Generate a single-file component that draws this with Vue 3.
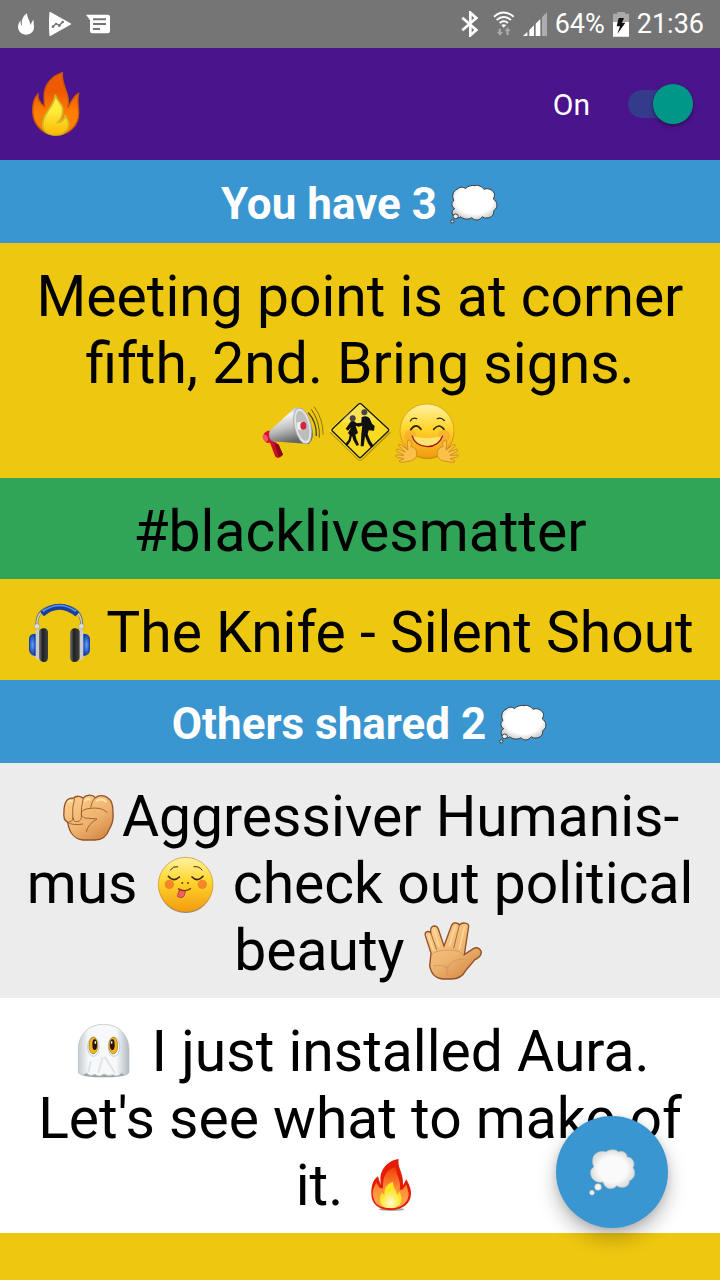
<script setup>
import { ref } from 'vue'

const sharing = ref(true)
</script>

<template>
  <div class="app">
    <svg class="defs" aria-hidden="true">
      <defs>
        <radialGradient id="cloudFill" cx=".5" cy=".42" r=".58"><stop offset=".7" stop-color="#fff" /><stop offset="1" stop-color="#cfcfcf" /></radialGradient>
        <symbol id="cloud" viewBox="741 48 153 153">
          <path d="M770 87C774 81 786 79 793 86C801 78 812 75 822 77C832 74 844 80 849 88C861 82 881 91 881 106C879 111 878 114 877 117C888 124 891 137 884 147C879 150 878 152 878 155C879 164 872 173 858 174C851 174 847 173 844 170C837 181 822 184 812 173C803 180 785 178 780 170C775 176 757 174 754 162C752 156 754 149 761 146C751 141 750 128 759 121C752 112 754 92 770 87Z" fill="url(#cloudFill)" stroke="#3b3b3b" stroke-width="3" />
          <ellipse cx="764" cy="169" rx="8" ry="7" fill="#eee" stroke="#3b3b3b" stroke-width="3" />
          <circle cx="754" cy="184" r="5" fill="#ccc" stroke="#3b3b3b" stroke-width="3" />
        </symbol>
      </defs>
    </svg>

    <div class="status">
      <div class="group notices">
        <svg width="16" height="22" viewBox="54 40 48 66"><path d="M81 41C67 50 64 63 66 79C62 76 61 69 62 62C57 69 54 75 54 83C55 97 66 105 78 105C92 105 102 96 102 82C102 75 100 67 101 60C96 64 95 70 91 76C91 65 81 55 81 41Z" fill="#fff" /></svg>
        <svg width="22" height="24" viewBox="153 36 66 72"><path d="M157 39L216 72L157 105Q155 72 157 39Z" fill="#fff" stroke="#fff" stroke-width="6" stroke-linejoin="round" /><path d="M165 80L174 71L184 76L194 66" fill="none" stroke="#757575" stroke-width="4" /><g fill="#757575"><circle cx="165" cy="80" r="4" /><circle cx="174" cy="71" r="3" /><circle cx="184" cy="77" r="4" /><circle cx="194" cy="66" r="4" /></g></svg>
        <svg width="24" height="20" viewBox="258 42 72 60"><path d="M258 44H324Q330 44 330 50V94Q330 100 324 100H276Q270 100 270 94V61Z" fill="#fff" /><path d="M279 58H318M279 72H318M279 87H300" stroke="#757575" stroke-width="6" /></svg>
      </div>
      <div class="group system">
        <svg class="bt" width="18" height="26" viewBox="66 33 54 78"><path d="M70 53L112 90L94 106V38L112 54L70 91" fill="none" stroke="#fff" stroke-width="8" /></svg>
        <svg class="wifi" width="22" height="26" viewBox="164 33 66 78"><g fill="none" stroke="#fff" stroke-width="6"><path d="M167 50Q196 25 226 50" /><path d="M175 60Q196 42 218 60" /><path d="M184 69Q196 59 209 69" /></g><path d="M189 75Q196 70 204 75L196 83Z" fill="#fff" /><path d="M181 86H188V96H194L185 107L176 96H181ZM204 105H211V93H217L208 82L199 93H204Z" fill="#aaa" /></svg>
        <svg class="signal" width="24" height="26" viewBox="252 33 72 78"><path d="M252 108L265 96V108ZM271 108V90L285 76V108ZM290 108V71L304 57V108Z" fill="#fff" /><path d="M309 108V52L324 36V108Z" fill="#adadad" /></svg>
        <span class="pct">64%</span>
        <svg class="battery" width="16" height="26" viewBox="519 33 48 78"><path d="M519 110V41H532V36H555V41H567V110Z" fill="#aaa" /><path d="M519 66H567V110H519Z" fill="#fff" /><path d="M536 54H552L546 68H556L532 102L540 79H530Z" fill="#111" /></svg>
        <time>21:36</time>
      </div>
    </div>

    <header class="bar">
      <svg width="52" height="70" viewBox="90 204 156 210" role="img" aria-label="Aura">
        <defs>
          <linearGradient id="brandOuter" x1="0" y1="0" x2="0" y2="1"><stop offset=".3" stop-color="#ef5a00" /><stop offset=".65" stop-color="#ff8000" /></linearGradient>
          <linearGradient id="brandInner" x1="0" y1="0" x2="0" y2="1"><stop offset=".4" stop-color="#ffeb3b" /><stop offset="1" stop-color="#ffb800" /></linearGradient>
        </defs>
        <g transform="translate(0 -2)">
          <path d="M187 215C152 226 132 255 132 286Q132 306 134 317C119 306 112 293 114 279C100 294 98 310 98 329C98 371 130 403 168 403C207 403 236 373 236 338C236 316 231 300 236 277C221 283 214 303 203 320C214 281 184 256 187 215Z" fill="#38116b" opacity=".5" transform="translate(0 4)" />
          <path d="M187 217C152 228 132 257 132 288Q132 308 134 319C119 308 112 295 114 281C100 296 98 312 98 331C98 373 130 405 168 405C207 405 236 375 236 340C236 318 231 302 236 279C221 285 214 305 203 322C214 283 184 258 187 217Z" fill="url(#brandOuter)" stroke="#c65700" stroke-width="4" />
          <path d="M166 283C163 322 128 335 128 373C128 393 145 404 168 404C192 404 206 389 206 370C206 356 197 353 196 344C193 358 184 365 174 366C186 354 189 339 188 325C186 307 169 302 166 283Z" fill="url(#brandInner)" stroke="#d1b62a" stroke-width="5" />
        </g>
      </svg>
      <label class="toggle">
        <span>On</span>
        <input v-model="sharing" type="checkbox" role="switch" />
      </label>
    </header>

    <main>
      <h2>You have 3 <svg class="emoji" role="img" aria-label="thoughts"><use href="#cloud" /></svg></h2>
      <p class="own">
        Meeting point is at corner fifth, 2nd. Bring signs.
        <span class="together"><svg class="emoji" viewBox="30 12 201 201" role="img" aria-label="megaphone">
          <defs><linearGradient id="horn" x1="0" y1="0" x2=".3" y2="1"><stop offset="0" stop-color="#888" /><stop offset=".3" stop-color="#f4f4f4" /><stop offset=".65" stop-color="#bbb" /><stop offset="1" stop-color="#666" /></linearGradient></defs>
          <path d="M56 148L80 158L99 193Q95 202 83 204L76 200Z" fill="#c9102b" /><path d="M74 162L86 201L99 194L86 163Z" fill="#8d0717" />
          <path d="M42 130Q54 118 66 123L69 152Q63 160 51 159Q35 148 42 130Z" fill="#d8122f" />
          <ellipse cx="46" cy="144" rx="7" ry="11" transform="rotate(-25 46 144)" fill="#f35467" />
          <path d="M59 122Q93 93 132 54Q156 46 178 88Q201 139 176 162L66 154Q53 143 59 122Z" fill="url(#horn)" />
          <ellipse cx="158" cy="108" rx="25" ry="55" transform="rotate(-13 158 108)" fill="#e2e2e2" stroke="#999" stroke-width="2" />
          <ellipse cx="158" cy="108" rx="18" ry="46" transform="rotate(-13 158 108)" fill="#bdbdbd" />
          <path d="M140 98L159 94L166 119L143 119Z" fill="#eee" /><ellipse cx="160" cy="107" rx="9" ry="12" fill="#cf2638" />
          <g fill="none"><path d="M175 68Q201 98 199 138" stroke="#463f16" stroke-width="4" /><path d="M184 58Q211 96 208 143" stroke="#685b17" stroke-width="3" /><path d="M192 50Q220 87 219 134" stroke="#8b781a" stroke-width="3" /></g>
        </svg><svg class="emoji" viewBox="231 12 201 201" role="img" aria-label="children crossing">
          <path d="M241 124L324 39Q330 34 336 39L420 123Q424 127 420 131L337 210Q330 216 324 210L241 130Q237 127 241 124Z" fill="#b9950a" />
          <path d="M240 117L324 38Q330 34 336 38L420 117Q423 121 420 124L336 206Q330 211 324 206L240 124Q237 121 240 117Z" fill="#ffdf27" />
          <path d="M247 117L326 42Q330 38 334 42L415 117Q418 120 415 123L334 201Q330 205 326 201L247 123Q244 120 247 117Z" fill="#f9da20" stroke="#171717" stroke-width="4" />
          <path d="M286 79L330 43L380 90Q330 100 272 98Z" fill="#fff" opacity=".23" />
          <g fill="#101010">
            <path d="M303 94Q312 90 318 98L330 103L338 99V107L326 110L317 107L324 129L316 134L319 146L327 164L320 168L310 151L306 137L302 153L292 167L286 162L296 149L299 134L294 129L304 111L294 122L287 116Z" />
            <path d="M335 82Q348 74 359 85L366 101L374 108L372 122L356 121L353 133L361 152L371 168L363 173L354 160L345 139L341 169L332 169L334 132L337 105L325 106L323 100L334 98Z" />
          </g>
          <g fill="#454545"><circle cx="308" cy="85" r="9" /><circle cx="343" cy="67" r="9" /></g>
        </svg><svg class="emoji" viewBox="432 12 201 201" role="img" aria-label="hugging face">
          <defs><linearGradient id="smile" x1="0" y1="0" x2="0" y2="1"><stop offset="0" stop-color="#fff2a0" /><stop offset=".45" stop-color="#ffd52c" /><stop offset="1" stop-color="#f29a10" /></linearGradient></defs>
          <circle cx="532" cy="127" r="80" fill="#8b6505" opacity=".6" /><circle cx="531" cy="123" r="81" fill="url(#smile)" stroke="#d28f1b" stroke-width="2" />
          <circle cx="481" cy="137" r="18" fill="#f59a36" opacity=".45" /><circle cx="582" cy="137" r="18" fill="#f59a36" opacity=".45" />
          <g fill="none" stroke="#332006" stroke-width="4" stroke-linecap="round"><path d="M481 93Q488 81 500 86M562 86Q574 81 583 92" /><path d="M482 119Q498 97 513 118M551 118Q567 98 582 118" stroke-width="5" /></g>
          <path d="M486 138Q530 151 577 138Q567 169 532 170Q498 169 486 138Z" fill="#ffe270" /><path d="M486 137Q496 169 532 170Q566 169 578 137" fill="none" stroke="#9b171c" stroke-width="4" />
          <g fill="#fac04a" stroke="#bf791d" stroke-width="2"><path id="hugHand" d="M480 154Q472 142 472 162L474 180L450 163Q444 162 447 168L466 186L442 177Q435 179 441 184L462 196L438 195Q433 199 442 202L462 206L448 212Q447 218 456 217L481 213Q503 207 500 188Q500 174 482 169Q490 157 480 154Z" /><use href="#hugHand" transform="translate(1062 0) scale(-1 1)" /></g>
        </svg></span>
      </p>
      <p class="tag">#blacklivesmatter</p>
      <p class="own">
        <svg class="emoji" viewBox="78 48 201 201" role="img" aria-label="headphones">
          <defs><radialGradient id="ear"><stop offset="0" stop-color="#66a0ff" /><stop offset="1" stop-color="#0d3da7" /></radialGradient><linearGradient id="pad"><stop offset="0" stop-color="#777" /><stop offset=".4" stop-color="#202020" /><stop offset="1" stop-color="#444" /></linearGradient></defs>
          <path d="M110 139Q108 77 178 77Q248 77 245 139" fill="none" stroke="#77776d" stroke-width="9" /><path d="M110 137Q110 80 178 77Q246 80 245 138" fill="none" stroke="#d2d2c8" stroke-width="4" />
          <path d="M126 102Q179 58 232 103" fill="none" stroke="#183f9e" stroke-width="17" /><path d="M130 93Q179 60 226 93" fill="none" stroke="#5795f1" stroke-width="5" stroke-linecap="round" />
          <circle cx="111" cy="139" r="8" fill="#ddd" stroke="#777" /><circle cx="244" cy="139" r="8" fill="#ddd" stroke="#777" />
          <path d="M108 161Q87 161 87 177V208Q88 228 108 228Z" fill="url(#ear)" /><path d="M249 161Q269 161 270 177V208Q270 228 249 228Z" fill="url(#ear)" />
          <rect x="107" y="148" width="16" height="92" rx="8" fill="#ccc" /><rect x="234" y="148" width="16" height="92" rx="8" fill="#ccc" />
          <path d="M117 153Q121 143 134 145Q145 147 144 161V232Q144 246 133 246Q121 247 117 235Z" fill="url(#pad)" /><path d="M239 153Q235 143 223 145Q210 147 210 161V232Q210 246 224 246Q235 246 239 235Z" fill="url(#pad)" />
        </svg> The Knife - Silent Shout
      </p>

      <h2>Others shared 2 <svg class="emoji" role="img" aria-label="thoughts"><use href="#cloud" /></svg></h2>
      <p class="shared">
        &nbsp;<svg class="emoji" viewBox="48 0 201 201" role="img" aria-label="raised fist">
          <defs><linearGradient id="skin" x1="0" y1="0" x2=".7" y2="1"><stop offset="0" stop-color="#ffd392" /><stop offset=".65" stop-color="#edb26f" /><stop offset="1" stop-color="#d58a49" /></linearGradient></defs>
          <path d="M102 55C112 46 126 48 132 54C143 43 161 43 169 53C180 44 197 45 208 55C221 63 222 80 222 97Q225 126 210 149Q200 180 168 180H131C108 178 91 159 86 127C74 122 73 108 75 93C75 70 83 53 102 55Z" fill="url(#skin)" stroke="#955126" stroke-width="4" />
          <path d="M107 55Q99 80 101 113Q102 126 88 126M133 54Q125 83 127 112Q126 126 109 125Q102 124 103 112M168 53Q158 63 155 83M205 97Q185 79 147 86Q126 89 127 103Q130 116 149 115L174 117Q147 132 142 156M87 127Q99 137 133 132" fill="none" stroke="#a6622f" stroke-width="3" /><path d="M138 62Q145 54 152 58M87 65Q93 60 99 63M174 62Q190 54 201 65" fill="none" stroke="#ffe4ae" stroke-width="6" stroke-linecap="round" />
        </svg>Aggressiver Humanis&shy;mus
        <svg class="emoji" viewBox="333 201 201 201" role="img" aria-label="savouring face">
          <circle cx="434" cy="319" r="80" fill="#888" /><circle cx="434" cy="314" r="82" fill="url(#smile)" stroke="#ce8a19" stroke-width="2" />
          <circle cx="385" cy="313" r="14" fill="#f26e28" opacity=".75" /><circle cx="484" cy="313" r="14" fill="#f26e28" opacity=".75" />
          <g fill="none" stroke="#3e2308" stroke-linecap="round"><path d="M388 270Q397 257 410 260M459 260Q475 258 483 270" stroke-width="3" /><path d="M382 289Q397 308 415 291M453 291Q470 308 486 289" stroke-width="5" /></g>
          <circle cx="424" cy="309" r="3" fill="#71400b" /><circle cx="441" cy="309" r="3" fill="#71400b" /><path d="M414 331L434 332L429 349Q420 358 409 349Z" fill="#f55c65" stroke="#9d302f" stroke-width="2" /><path d="M411 326Q435 338 450 325" fill="none" stroke="#70400b" stroke-width="4" />
        </svg> check out political beauty
        <svg class="emoji" viewBox="54 42 201 201" role="img" aria-label="vulcan salute">
          <path d="M90 159L73 107C70 96 80 91 89 98C87 84 93 77 102 78Q109 79 112 87L129 138L151 78Q155 67 165 69Q173 70 175 75C183 65 204 69 203 79L190 164L217 146C231 138 244 151 240 162Q237 172 222 179L194 212Q181 237 151 237H126Q93 235 86 198Z" fill="url(#skin)" stroke="#925024" stroke-width="4" />
          <path d="M89 98L107 149M175 75L158 145" fill="none" stroke="#a66b37" stroke-width="3" /><path d="M90 165Q107 146 161 151Q179 153 186 164M190 177Q151 177 140 202Q132 218 144 229M143 204Q119 191 98 199" fill="none" stroke="#cc8b4c" stroke-width="2" /><path d="M163 79L145 137M191 79L175 147M99 88L114 139M83 108L97 151" stroke="#ffdc9d" stroke-width="4" stroke-linecap="round" />
        </svg>
      </p>
      <p class="shared plain">
        <svg class="emoji" viewBox="33 15 201 201" role="img" aria-label="ghost">
          <defs><linearGradient id="sheet"><stop offset="0" stop-color="#c4cbcf" /><stop offset=".2" stop-color="#f6f8f9" /><stop offset=".75" stop-color="#f6f8f9" /><stop offset="1" stop-color="#b1bac0" /></linearGradient></defs>
          <ellipse cx="134" cy="193" rx="67" ry="9" fill="#777" opacity=".7" /><path d="M58 188V119C58 73 89 43 134 43C180 43 210 76 210 119V188Q199 202 188 189Q176 204 162 194Q148 201 135 192Q121 203 108 193Q93 201 82 189Q71 202 58 188Z" fill="url(#sheet)" stroke="#b5bdc2" stroke-width="2" />
          <path d="M131 141L118 188M137 140L169 191M95 154L88 187" stroke="#dfe4e7" stroke-width="6" />
          <g stroke="#c2cace" stroke-width="3" fill="#fff"><ellipse cx="103" cy="110" rx="17" ry="29" /><ellipse cx="165" cy="110" rx="17" ry="29" /></g><g fill="#eeb81b" stroke="#986b0b" stroke-width="2"><ellipse cx="103" cy="107" rx="13" ry="25" /><ellipse cx="163" cy="107" rx="13" ry="25" /></g><ellipse cx="107" cy="104" rx="7" ry="16" fill="#2b0f08" /><ellipse cx="160" cy="104" rx="7" ry="16" fill="#2b0f08" /><path d="M109 94V101M158 94V101" stroke="#fff" stroke-width="4" />
        </svg> I just installed Aura. Let's see what to make of it.
        <svg class="emoji" viewBox="21 27 201 201" role="img" aria-label="fire">
          <defs><linearGradient id="flameMid" x1="0" y1="0" x2="0" y2="1"><stop offset="0" stop-color="#ef3c08" /><stop offset=".5" stop-color="#ff8b37" /><stop offset="1" stop-color="#ffb04e" /></linearGradient><radialGradient id="flameCore" cx=".5" cy=".8"><stop offset="0" stop-color="#fff9d5" /><stop offset="1" stop-color="#ffe51e" /></radialGradient></defs>
          <ellipse cx="125" cy="208" rx="38" ry="5" fill="#777" opacity=".65" /><path d="M146 57C116 60 93 86 91 113L92 135L84 109C68 119 63 142 64 163C64 195 91 211 123 210C158 210 183 191 183 160C183 143 176 132 169 118L159 136C162 102 141 82 146 57Z" fill="#e51d08" />
          <path d="M137 82C108 89 98 110 99 145H90L79 128C67 148 66 162 71 175C76 199 100 204 124 205C155 204 177 187 176 160L169 134L157 149H149C155 122 138 106 137 82Z" fill="url(#flameMid)" /><path d="M129 125C109 132 101 147 104 166L95 158C85 178 87 204 121 204C151 205 163 181 148 155L141 166C142 151 128 143 129 125Z" fill="url(#flameCore)" />
        </svg>
      </p>
    </main>

    <button class="fab" type="button" aria-label="New thought">
      <svg viewBox="78 78 336 336" aria-hidden="true">
        <defs><radialGradient id="bubble"><stop offset=".65" stop-color="#fafafa" /><stop offset="1" stop-color="#dedede" /></radialGradient></defs>
        <path d="M188 213C187 190 210 180 228 186C239 177 259 178 265 186C279 181 291 189 291 201C307 202 317 218 309 233C319 248 313 266 298 272C298 292 275 297 260 287C248 301 226 299 219 276C199 280 182 267 182 249C181 240 186 235 192 230Q187 222 188 213Z" fill="url(#bubble)" stroke="#c9c2b7" stroke-width="2" /><circle cx="204" cy="291" r="10" fill="#f4f4f4" stroke="#c9c2b7" stroke-width="2" /><circle cx="186" cy="308" r="7" fill="#f4f4f4" stroke="#c9c2b7" stroke-width="2" />
      </svg>
    </button>
  </div>
</template>

<style>
body {
  margin: 0;
  background: #eec710;
}
</style>

<style scoped>
.app {
  min-height: 100vh;
  background: #eec710;
  font-family: Roboto, "Liberation Sans", sans-serif;
  color: #000;
}
.defs {
  position: absolute;
  width: 0;
  height: 0;
}
.status {
  display: flex;
  align-items: center;
  justify-content: space-between;
  height: 48px;
  padding: 0 16px 0 18px;
  background: #757575;
  color: #fff;
  font-size: 27px;
}
.group {
  display: flex;
  align-items: center;
}
.notices {
  gap: 15px;
}
.system {
  gap: 8px;
}
.bt {
  margin-right: 6px;
}
.bar {
  display: flex;
  align-items: center;
  justify-content: space-between;
  height: 112px;
  padding: 0 27px 0 30px;
  background: #4a148c;
}
.toggle {
  display: flex;
  align-items: center;
  gap: 38px;
  color: #fff;
  font-size: 30px;
}
.toggle input {
  appearance: none;
  display: flex;
  align-items: center;
  width: 65px;
  height: 28px;
  margin: 0;
  border-radius: 14px;
  background: #343b8b;
  cursor: pointer;
}
.toggle input::after {
  content: "";
  width: 40px;
  height: 40px;
  border-radius: 50%;
  background: #aaa;
  box-shadow: 0 2px 4px rgba(0, 0, 0, 0.4);
}
.toggle input:checked {
  justify-content: flex-end;
}
.toggle input:checked::after {
  background: #009688;
}
h2,
p {
  margin: 0;
  text-align: center;
}
h2 {
  padding: 19px 16px 13px;
  background: #3a96d1;
  color: #fff;
  font-size: 44px;
  font-weight: 700;
  line-height: 51px;
}
p {
  padding: 20px 16px 14px;
  font-size: 57px;
  line-height: 67px;
}
.emoji {
  display: inline-block;
  width: 67px;
  height: 67px;
  margin-top: -3px;
  overflow: visible;
  vertical-align: top;
}
h2 .emoji {
  width: 51px;
  height: 51px;
}
.together {
  white-space: nowrap;
}
.own {
  background: #eec710;
}
.tag {
  background: #30a457;
}
.shared {
  background: #ececec;
}
.plain {
  background: #fff;
}
.fab {
  position: fixed;
  right: 52px;
  bottom: 52px;
  width: 112px;
  height: 112px;
  padding: 0;
  border: 0;
  border-radius: 50%;
  background: #3a96d1;
  box-shadow: 0 10px 20px rgba(0, 0, 0, 0.26), 0 2px 8px rgba(0, 0, 0, 0.12);
  cursor: pointer;
}
.fab svg {
  display: block;
  width: 100%;
}
</style>
